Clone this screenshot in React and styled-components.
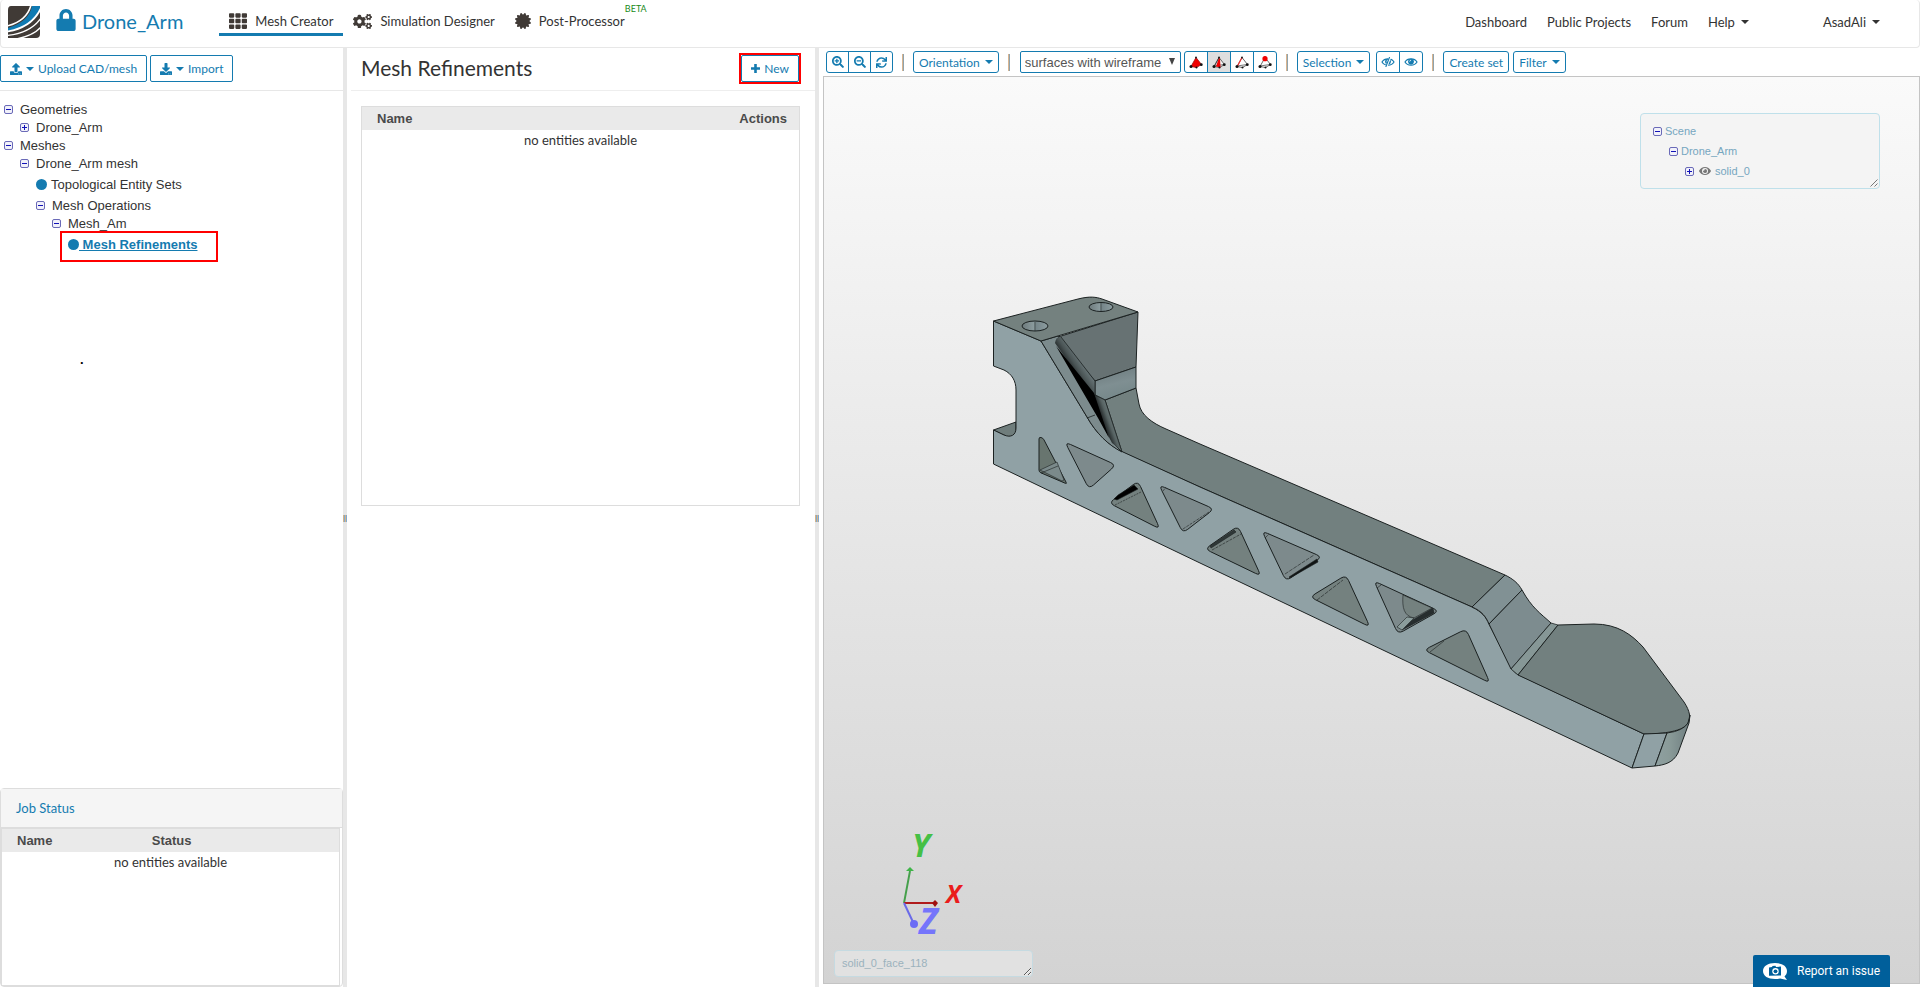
// ■■■■■■■■■■■■■■■■■■■■■■■■■■■■■■■■■■■■■■■■■■■■■■■■■■■■■■■■■■■■■■■■■■■■■■■■■■■■■

import React from "react"
import styled, { createGlobalStyle, css } from "styled-components"
import {
	FaCertificate,
	FaCogs,
	FaDownload,
	FaEye,
	FaLock,
	FaSearchMinus,
	FaSearchPlus,
	FaSync,
	FaTh,
	FaUpload,
} from "react-icons/fa"

const BLUE = "#147bb0"
const LATO = `Lato, "Open Sans", sans-serif`
const ARIAL = `"Liberation Sans", Arial, sans-serif`

// ■■■■■■■■■■■■■■■■■■■■■■■■■■■■■■■■■■■■■■■■■■■■■■■■■■■■■■■■■■■■■■■■■■■■■■■■■■■■■

export default function App() {
	return (
		<Page>
			<GlobalStyle />
			<Header />
			<Workspace>
				<Sidebar />
				<Splitter>
					<span>||</span>
				</Splitter>
				<Refinements />
				<Splitter>
					<span>||</span>
				</Splitter>
				<Viewer />
			</Workspace>
		</Page>
	)
}

// 〓〓〓〓〓〓〓〓〓〓〓〓〓〓〓〓〓〓〓〓〓〓〓〓〓〓〓〓〓〓	HEADER

function Header() {
	return (
		<StyledHeader>
			<Logo />
			<Project href="#project">
				<FaLock size={22} />
				Drone_Arm
			</Project>
			<Tabs>
				<Tab href="#mesh" $active>
					<FaTh size={18} />
					Mesh Creator
				</Tab>
				<Tab href="#simulation">
					<FaCogs size={19} />
					Simulation Designer
				</Tab>
				<Tab href="#post">
					<FaCertificate size={16} />
					Post-Processor
					<Beta>BETA</Beta>
				</Tab>
			</Tabs>
			<UserNav>
				<a href="#dashboard">Dashboard</a>
				<a href="#projects">Public Projects</a>
				<a href="#forum">Forum</a>
				<a href="#help">
					Help <Caret />
				</a>
				<UserLink href="#user">
					AsadAli <Caret />
				</UserLink>
			</UserNav>
		</StyledHeader>
	)
}

function Logo() {
	return (
		<svg width="32" height="32" viewBox="0 0 32 32" aria-label="Home">
			<clipPath id="logoClip">
				<path d="M3 0H32V28Q32 32 28 32H0V4Q0 0 3 0Z" />
			</clipPath>
			<g clipPath="url(#logoClip)">
				<rect width="32" height="32" fill="#403a36" />
				<path d="M0 22C13 18 22 11 24 0H32V3C27 14 18 23 0 25Z" fill="#0f7ab2" />
				<g fill="none" stroke="#fff">
					<path d="M-1 20C11 17 20 11 23 -1" strokeWidth="1.6" />
					<path d="M-1 25.500C15 23 27 15 33 2" strokeWidth="1.8" />
					<path d="M-1 29.500C14 28 26 22 33 12" strokeWidth="1.4" />
					<path d="M8 33C19 31 27 28 33 21" strokeWidth="1.4" />
				</g>
			</g>
		</svg>
	)
}

// 〓〓〓〓〓〓〓〓〓〓〓〓〓〓〓〓〓〓〓〓〓〓〓〓〓〓〓〓〓〓	SIDEBAR

function Sidebar() {
	return (
		<StyledSidebar>
			<ButtonRow>
				<Button>
					<FaUpload size={12} />
					<Caret />
					Upload CAD/mesh
				</Button>
				<Button>
					<FaDownload size={12} />
					<Caret />
					Import
				</Button>
			</ButtonRow>
			<Tree>
				<Node $level={0}>
					<Toggle open />
					Geometries
				</Node>
				<Node $level={1}>
					<Toggle />
					Drone_Arm
				</Node>
				<Node $level={0}>
					<Toggle open />
					Meshes
				</Node>
				<Node $level={1}>
					<Toggle open />
					Drone_Arm mesh
				</Node>
				<Leaf $level={2}>
					<Dot />
					Topological Entity Sets
				</Leaf>
				<Node $level={2}>
					<Toggle open />
					Mesh Operations
				</Node>
				<Node $level={3}>
					<Toggle open />
					Mesh_Am
				</Node>
				<Leaf $level={4} $marked>
					<Dot />
					<a href="#refinements">&nbsp;Mesh Refinements</a>
				</Leaf>
			</Tree>
			<Stray>.</Stray>
			<JobPanel>
				<JobTitle>Job Status</JobTitle>
				<JobBody>
					<Table>
						<thead>
							<tr>
								<th>Name</th>
								<th>Status</th>
							</tr>
						</thead>
						<tbody>
							<tr>
								<td colSpan={2}>no entities available</td>
							</tr>
						</tbody>
					</Table>
				</JobBody>
			</JobPanel>
		</StyledSidebar>
	)
}

function Toggle({ open }) {
	return (
		<svg width="10" height="10" viewBox="0 0 10 10">
			<rect x="0.5" y="1.5" width="8" height="8" rx="1.5" fill="#f1f1fa" stroke="#6a6ab8" />
			<path d={open ? "M2 5.5H7" : "M2 5.5H7M4.5 3V8"} stroke="#1212b8" />
		</svg>
	)
}

// 〓〓〓〓〓〓〓〓〓〓〓〓〓〓〓〓〓〓〓〓〓〓〓〓〓〓〓〓〓〓	MESH REFINEMENTS

function Refinements() {
	return (
		<StyledRefinements>
			<TitleRow>
				<h1>Mesh Refinements</h1>
				<Marked>
					<Button>
						<PlusIcon />
						New
					</Button>
				</Marked>
			</TitleRow>
			<EntityBox>
				<Table>
					<thead>
						<tr>
							<th>Name</th>
							<th className="end">Actions</th>
						</tr>
					</thead>
					<tbody>
						<tr>
							<td colSpan={2}>no entities available</td>
						</tr>
					</tbody>
				</Table>
			</EntityBox>
		</StyledRefinements>
	)
}

function PlusIcon() {
	return (
		<svg width="9" height="9" viewBox="0 0 9 9">
			<path d="M4.5 0V9M0 4.5H9" stroke={BLUE} strokeWidth="2.6" />
		</svg>
	)
}

// 〓〓〓〓〓〓〓〓〓〓〓〓〓〓〓〓〓〓〓〓〓〓〓〓〓〓〓〓〓〓	VIEWER

function Viewer() {
	return (
		<StyledViewer>
			<Toolbar>
				<Group>
					<ToolButton aria-label="Zoom in">
						<FaSearchPlus size={12} />
					</ToolButton>
					<ToolButton aria-label="Zoom out">
						<FaSearchMinus size={12} />
					</ToolButton>
					<ToolButton aria-label="Reset view">
						<FaSync size={11} />
					</ToolButton>
				</Group>
				<Separator />
				<ToolButton>
					Orientation <Caret />
				</ToolButton>
				<Separator />
				<SelectBox>
					<select aria-label="Render mode" defaultValue="wire">
						<option value="wire">surfaces with wireframe</option>
						<option value="surfaces">surfaces</option>
					</select>
					<svg width="6" height="7" viewBox="0 0 6 7">
						<path d="M0 0H6L3 7Z" fill="#444" />
					</svg>
				</SelectBox>
				<Group>
					<ToolButton aria-label="Pick volumes">
						<Tetra kind="volume" />
					</ToolButton>
					<ToolButton aria-label="Pick faces" $pressed>
						<Tetra kind="face" />
					</ToolButton>
					<ToolButton aria-label="Pick edges">
						<Tetra kind="edge" />
					</ToolButton>
					<ToolButton aria-label="Pick nodes">
						<Tetra kind="node" />
					</ToolButton>
				</Group>
				<Separator />
				<ToolButton>
					Selection <Caret />
				</ToolButton>
				<Group>
					<ToolButton aria-label="Hide">
						<EyeIcon slashed />
					</ToolButton>
					<ToolButton aria-label="Show">
						<EyeIcon />
					</ToolButton>
				</Group>
				<Separator />
				<Pair>
					<ToolButton>Create set</ToolButton>
					<ToolButton>
						Filter <Caret />
					</ToolButton>
				</Pair>
			</Toolbar>
			<Canvas>
				<Scene />
				<ScenePanel>
					<SceneNode $level={0}>
						<Toggle open />
						Scene
					</SceneNode>
					<SceneNode $level={1}>
						<Toggle open />
						Drone_Arm
					</SceneNode>
					<SceneNode $level={2}>
						<Toggle />
						<FaEye size={12} />
						solid_0
					</SceneNode>
					<Grip />
				</ScenePanel>
				<Picked aria-label="Picked entities" defaultValue="solid_0_face_118" />
				<Report>
					<ReportIcon />
					Report an issue
				</Report>
			</Canvas>
		</StyledViewer>
	)
}

function Tetra({ kind }) {
	return (
		<svg width="14" height="13" viewBox="0 0 14 13" strokeLinejoin="round">
			<path
				d="M7 1.5L2 10.5L7.5 11.5L12.5 8.5Z"
				fill={kind === "volume" ? "#f00000" : "#fff"}
				fillOpacity={kind === "volume" ? 1 : 0.6}
				stroke={kind === "volume" ? "#a01010" : "#444"}
				strokeWidth="0.8"
			/>
			{kind !== "volume" && <path d="M2 10L12 8.5" stroke="#555" strokeWidth="0.8" />}
			{kind === "face" && <path d="M7 1.5L4 10.5L8.5 11.5L8 3Z" fill="#f00000" />}
			{kind === "edge" && <path d="M7 1.5L2.5 10" stroke="#f03030" strokeWidth="1.2" />}
			{kind === "face" && <path d="M7 1.5L2.500 10" stroke="#333" strokeWidth="0.8" />}
			<g fill="#111">
				<circle cx="2" cy="10.5" r="1.5" />
				<circle cx="7.5" cy="11.5" r="1" />
				<circle cx="12.3" cy="8.7" r="1.4" />
				<circle cx="7" cy="1.5" r="0.9" />
			</g>
			{kind === "node" && <circle cx="7" cy="2.7" r="2.6" fill="#f00000" />}
		</svg>
	)
}

function EyeIcon({ slashed }) {
	return (
		<svg width="14" height="10" viewBox="0 0 14 10">
			<path d="M1 5C3.500 0.800 10.500 0.800 13 5C10.500 9.200 3.500 9.200 1 5Z" fill="#fff" stroke={BLUE} strokeWidth="1.2" />
			<circle cx="7" cy="4.6" r="2.9" fill={BLUE} />
			<path d="M5.7 4.6A1.4 1.4 0 0 1 7.1 3.2" fill="none" stroke="#fff" strokeWidth="0.8" />
			{slashed && <path d="M9.2 0L5.2 10" stroke="#fff" strokeWidth="2.2" />}
			{slashed && <path d="M8.6 0L4.800 10" stroke={BLUE} strokeWidth="1.1" />}
		</svg>
	)
}

function ReportIcon() {
	return (
		<svg width="25" height="17" viewBox="0 0 25 17">
			<path d="M12 0C19 0 24 3 24 8C24 10.500 23 12 21.500 13.500L24 17L17 15.500C15.500 16 14 16 12 16C5 16 0 13 0 8C0 3 5 0 12 0Z" fill="#fff" />
			<path d="M6 4.500L9 4L9.500 3L12.500 2.800L13 4L18 3.600V12.500L6 12.800Z" fill="#005f9b" />
			<circle cx="12.500" cy="8.300" r="3.200" fill="#fff" />
			<circle cx="12.500" cy="8.300" r="1.900" fill="#005f9b" />
		</svg>
	)
}

function Grip() {
	return (
		<StyledGrip width="8" height="8" viewBox="0 0 8 8">
			<path d="M0.500 7.500L7.500 0.500M4.500 7.500L7.500 4.500" stroke="#777" />
		</StyledGrip>
	)
}

// 〓〓〓〓〓〓〓〓〓〓〓〓〓〓〓〓〓〓〓〓〓〓〓〓〓〓〓〓〓〓	3D SCENE

// closed polygon with its corners rounded by r
const rounded = (points, r = 6) =>
	points
		.map((p, i) => {
			const prev = points[(i + points.length - 1) % points.length]
			const next = points[(i + 1) % points.length]
			const toward = (q) => {
				const d = Math.hypot(q[0] - p[0], q[1] - p[1])
				return `${p[0] + ((q[0] - p[0]) * r) / d} ${p[1] + ((q[1] - p[1]) * r) / d}`
			}
			return `${i ? "L" : "M"}${toward(prev)}Q${p[0]} ${p[1]} ${toward(next)}`
		})
		.join("") + "Z"

const POCKETS = [
	{ fill: "#68756f", points: [[1039, 437], [1043, 438], [1067, 484], [1039, 472]] },
	{ fill: "#7d8a8c", points: [[1065, 442], [1116, 465], [1089, 489]] },
	{ fill: "#74817f", points: [[1109, 503], [1138, 481], [1160, 529]] },
	{ fill: "#7d8a8c", points: [[1159, 485], [1214, 509], [1183, 533]] },
	{ fill: "#74817f", points: [[1205, 549], [1238, 526], [1261, 576]] },
	{ fill: "#7d8a8c", points: [[1262, 531], [1322, 557], [1286, 581]] },
	{ fill: "#74817f", points: [[1310, 597], [1346, 575], [1370, 627]] },
	{ fill: "#7d8a8c", points: [[1374, 581], [1439, 611], [1398, 634]] },
	{ fill: "#74817f", points: [[1424, 650], [1466, 629], [1490, 683]] },
]

function Scene() {
	return (
		<StyledScene viewBox="824 77 1095 906">
			<defs>
				<linearGradient id="bend" x1="0" y1="0" x2="0.300" y2="1">
					<stop offset="0" stopColor="#69777a" />
					<stop offset="0.600" stopColor="#7f8f92" />
					<stop offset="1" stopColor="#76888a" />
				</linearGradient>
				<linearGradient id="roll" gradientUnits="userSpaceOnUse" x1="1070" y1="370" x2="1082" y2="362">
					<stop offset="0" stopColor="#1c2021" />
					<stop offset="0.500" stopColor="#4a5455" />
					<stop offset="1" stopColor="#677476" />
				</linearGradient>
				<linearGradient id="lowerRoll" gradientUnits="userSpaceOnUse" x1="1102" y1="420" x2="1113" y2="416">
					<stop offset="0" stopColor="#1c2021" />
					<stop offset="0.500" stopColor="#566262" />
					<stop offset="1" stopColor="#728080" />
				</linearGradient>
				<linearGradient id="tip">
					<stop offset="0" stopColor="#8fa0a1" />
					<stop offset="0.400" stopColor="#8a9b99" />
					<stop offset="1" stopColor="#6f7e80" />
				</linearGradient>
				<linearGradient id="hole">
					<stop offset="0" stopColor="#6c797b" />
					<stop offset="0.450" stopColor="#8b9b9e" />
					<stop offset="0.550" stopColor="#76868a" />
					<stop offset="1" stopColor="#8d9da0" />
				</linearGradient>
			</defs>

			<g stroke="#1c2222" strokeWidth="1" strokeLinejoin="round">
				{/* notch behind the lower jaw */}
				<path d="M993.500 430L1016 422V436L1008 437Z" fill="#6f7d7c" />
				{/* long upper surface */}
				<path
					d="M1105 400L1136 388L1139 404C1141 415 1152 423 1166 429L1200 444L1505 575L1472 607L1200 487L1122 452Z"
					fill="#72807f"
				/>
				{/* side face */}
				<path
					d="M993.500 321L1041 341L1087 417C1096 433 1108 445 1123 452L1200 487L1472 607C1482 612 1486 617 1489 624L1511 667C1513 671 1515 673 1519 675L1644 734L1632 768L1488 700L1200 563L1152 540L993.500 464V430L1004 435C1011 438 1016 435 1016 428V390C1016 381 1012 374 1004 370L993.500 366Z"
					fill="#90a1a5"
				/>
				{/* mounting block */}
				<path d="M1058 337L1138 312L1136 367L1095 381Z" fill="#677273" />
				<path d="M1041 341L1058 336L1115 445L1122 452C1108 445 1096 433 1087 417Z" fill="#7c8b8d" />
				<path d="M1095 381L1136 367L1136 388L1105 400L1095 395Z" fill="url(#bend)" />
				<path d="M1055 343Q1056 336 1061 337L1095 381V396L1088 390Z" fill="url(#roll)" stroke="none" />
				<path d="M1094 394L1105 400L1122 451L1112 443L1094 408Z" fill="url(#lowerRoll)" stroke="none" />
				<path d="M1056 346L1094 393L1109 438L1098 418Z" fill="#000" stroke="none" />
				<path d="M1061 337L1095 381V395L1105 400L1122 452" fill="none" strokeWidth="0.800" />
				<path d="M1087 418L1095 415" strokeWidth="0.800" />
				<path
					d="M993.500 321L1078 299C1090 296 1096 297 1102 299L1138 312L1041 341Z"
					fill="#74817f"
				/>
				<ellipse cx="1035" cy="326" rx="13" ry="5" fill="url(#hole)" />
				<ellipse cx="1101" cy="307" rx="12" ry="4.500" fill="url(#hole)" />
				<path d="M1035 322V331M1101 303V311" strokeWidth="0.600" />

				{/* step down to the motor mount */}
				<path
					d="M1505 575C1513 579 1518 583 1522 590L1489 624C1486 617 1482 611 1472 607Z"
					fill="#819194"
				/>
				<path
					d="M1522 590C1532 608 1540 613 1551 623L1511 669L1489 624Z"
					fill="#7d8c8f"
				/>
				<path d="M1551 623L1558 625L1518 675L1511 669Z" fill="#869796" strokeWidth="0.800" />
				<path
					d="M1558 625L1594 624C1618 624 1632 635 1643 647L1684 702C1690 711 1691 718 1688 723C1684 731 1664 734 1644 734L1518 675Z"
					fill="#72807f"
				/>
				<path d="M1644 734L1667 733L1655 766L1632 768Z" fill="#90a1a5" />
				<path
					d="M1667 733Q1683 731 1688 723L1690 715L1689 723L1678 753C1673 763 1664 765 1655 766Z"
					fill="url(#tip)"
				/>
			</g>

			{/* lightening pockets */}
			<g stroke="#1a2020" strokeWidth="1">
				{POCKETS.map(({ fill, points }) => (
					<path key={points[0].join()} d={rounded(points, points.length > 3 ? 2 : 6)} fill={fill} />
				))}
			</g>
			<g stroke="#1c2222" strokeWidth="0.600" fill="none">
				<path d="M1040 470L1057 462L1064 480L1062 481Z" fill="#7b8a8b" />
				<path d="M1041 473L1058 466" />
				<path d="M1114 499L1118 495L1134 485L1138 489L1117 500Z" fill="#000" />
				<path d="M1115 505L1141 492" strokeDasharray="2 1" />
				<path d="M1183 529L1209 512M1163 491L1166 487" strokeDasharray="3 1" />
				<path d="M1210 546L1234 530L1236 532L1211 548Z" fill="#2f3838" />
				<path d="M1212 550L1241 534" strokeDasharray="3 1" />
				<path d="M1289 577L1317 559L1318 562L1290 578Z" fill="#101414" />
				<path d="M1285 574L1314 555M1265 538L1269 534" strokeDasharray="4 1" />
				<path d="M1317 600L1343 580" strokeDasharray="4 1" />
				<path d="M1403 595C1402 608 1404 616 1414 618L1432 608Z" fill="#74817f" />
				<path d="M1402 630L1411 621L1433 608L1434 613Z" fill="#262d2e" />
				<path d="M1397 627L1407 617L1414 618L1402 630Z" fill="#8b9d9c" />
				<path d="M1377 588L1381 585M1430 652L1444 641" />
			</g>

			{/* orientation axes */}
			<g strokeWidth="2">
				<path d="M904 903L910 871" stroke="#45a04b" />
				<path d="M904 903H934" stroke="#b01c1c" />
				<path d="M904 903L913 922" stroke="#6a6ae8" />
			</g>
			<path d="M906 871L910 867L914 871Z" fill="#3fb548" />
			<path d="M932 903L935 900L938 903L935 907Z" fill="#a01010" />
			<circle cx="914" cy="924" r="4" fill="#6c6cf5" />
			<Axis x="912" y="857" fill="#45c045">
				Y
			</Axis>
			<Axis x="946" y="903" fill="#ea1c1c" $small>
				X
			</Axis>
			<Axis x="919" y="934" fill="#7575fb" $large>
				Z
			</Axis>
		</StyledScene>
	)
}

// 〓〓〓〓〓〓〓〓〓〓〓〓〓〓〓〓〓〓〓〓〓〓〓〓〓〓〓〓〓〓	STYLED_COMPONENTS

const GlobalStyle = createGlobalStyle`
	*, *::before, *::after {
		box-sizing: border-box;
	}

	body {
		margin: 0;
		background-color: #ffffff;
		color: #333333;
		font-family: ${LATO};
		font-size: 13px;
	}

	a {
		color: inherit;
		text-decoration: none;
	}

	button, select, textarea {
		margin: 0;
		font: inherit;
	}
`

const Page = styled.div`
	display: flex;
	flex-direction: column;
	min-height: 100vh;
`

const StyledHeader = styled.header`
	display: flex;
	align-items: center;
	height: 48px;
	padding: 0 30px 4px 7px;
	border: 1px solid #e7e7e7;
	border-top: 0;
	border-radius: 4px;
`

const Project = styled.a`
	display: flex;
	align-items: center;
	gap: 5px;
	margin-left: 15px;
	padding-bottom: 2px;
	color: ${BLUE};
	font-size: 20px;
	line-height: 24px;

	svg {
		margin-bottom: 2px;
	}
`

const Tabs = styled.nav`
	display: flex;
	align-self: stretch;
	align-items: flex-start;
	margin-left: 36px;
	padding-top: 6px;
`

const Tab = styled.a`
	position: relative;
	display: flex;
	align-items: center;
	gap: 8px;
	height: 30px;
	padding: 3px 10px 0;
	border-bottom: 3px solid ${({ $active }) => ($active ? BLUE : "transparent")};

	svg {
		color: #403a36;
	}
`

const Beta = styled.sup`
	position: absolute;
	top: -3px;
	right: -12px;
	color: #1a8a1a;
	font-size: 9px;
	line-height: 12px;
`

const UserNav = styled.nav`
	display: flex;
	gap: 20px;
	margin-left: auto;

	a {
		display: flex;
		align-items: center;
		gap: 6px;
		line-height: 20px;
	}
`

const UserLink = styled.a`
	margin: 0 9px 0 54px;
`

const Caret = styled.span`
	display: inline-block;
	border-top: 4px solid;
	border-right: 4px solid transparent;
	border-left: 4px solid transparent;
`

const Workspace = styled.main`
	display: grid;
	flex: 1;
	grid-template-columns: 343px 4px 468px 4px minmax(0, 1fr);
`

const Splitter = styled.div`
	display: flex;
	align-items: center;
	justify-content: center;
	background-color: #e7e7e7;
	color: #333333;
	font-family: ${ARIAL};
	font-size: 8px;
`

const StyledSidebar = styled.aside`
	display: flex;
	flex-direction: column;
`

const ButtonRow = styled.div`
	display: flex;
	align-items: center;
	gap: 3px;
	height: 43px;
	padding-bottom: 1px;
	border-bottom: 1px solid #e7e7e7;
`

const Button = styled.button`
	display: flex;
	align-items: center;
	gap: 4px;
	height: 27px;
	padding: 0 9px;
	border: 1px solid ${BLUE};
	border-radius: 2px;
	background-color: #ffffff;
	color: ${BLUE};
	font-size: 12px;
	cursor: pointer;
`

const Tree = styled.div`
	padding-top: 9px;
	font-family: ${ARIAL};
`

const Node = styled.div`
	display: flex;
	align-items: center;
	gap: 6px;
	height: 18px;
	padding-left: ${({ $level }) => 4 + $level * 16}px;
`

const Leaf = styled(Node)`
	position: relative;
	gap: ${({ $marked }) => ($marked ? 0 : 4)}px;
	height: 24px;

	a {
		color: ${BLUE};
		font-weight: bold;
		text-decoration: underline;
	}

	${({ $marked }) =>
		$marked &&
		css`
			&::after {
				content: "";
				position: absolute;
				top: -1px;
				left: 60px;
				width: 158px;
				height: 31px;
				border: 2px solid #ff0000;
			}
		`}
`

const Dot = styled.span`
	width: 11px;
	height: 11px;
	border-radius: 50%;
	background-color: ${BLUE};
`

const Stray = styled.div`
	margin-top: 96px;
	padding-left: 80px;
	color: #000000;
	font-family: ${ARIAL};
	font-weight: bold;
	line-height: 16px;
`

const JobPanel = styled.section`
	display: flex;
	flex-direction: column;
	height: 199px;
	margin-top: auto;
	border: 1px solid #dddddd;
	border-radius: 4px;
`

const JobTitle = styled.h2`
	margin: 0;
	padding: 0 15px;
	border-bottom: 1px solid #dddddd;
	background-color: #f5f5f5;
	color: ${BLUE};
	font-size: 13px;
	font-weight: normal;
	line-height: 38px;
`

const JobBody = styled.div`
	flex: 1;
	margin-right: 2px;
	border: 1px solid #dddddd;
`

const Table = styled.table`
	width: 100%;
	border-collapse: collapse;
	table-layout: fixed;

	th {
		width: 40%;
		height: 23px;
		padding: 0 15px 1px;
		background-color: #eaeaea;
		color: #4a4a4a;
		font-family: ${ARIAL};
		text-align: left;
	}

	th + th {
		width: 60%;
	}

	th.end {
		padding-right: 12px;
		text-align: right;
	}

	td {
		padding: 0;
		line-height: 20px;
		text-align: center;
	}
`

const StyledRefinements = styled.section`
	padding-left: 4px;
`

const TitleRow = styled.div`
	display: flex;
	align-items: center;
	justify-content: space-between;
	height: 43px;
	padding: 0 14px 2px 10px;
	border-bottom: 1px solid #eeeeee;

	h1 {
		margin: 0;
		padding-bottom: 2px;
		font-size: 21px;
		font-weight: normal;
	}
`

const Marked = styled.div`
	border: 2px solid #ff0000;
`

const EntityBox = styled.div`
	height: 400px;
	margin: 15px 15px 0 10px;
	border: 1px solid #dddddd;
`

const StyledViewer = styled.section`
	display: flex;
	flex-direction: column;
	padding: 0 0 3px 4px;
`

const Toolbar = styled.div`
	display: flex;
	align-items: center;
	height: 28px;
	padding: 0 3px;
`

const ToolButton = styled.button`
	display: flex;
	align-items: center;
	justify-content: center;
	gap: 5px;
	height: 22px;
	padding: 0 5px;
	border: 1px solid ${BLUE};
	border-radius: 3px;
	background-color: ${({ $pressed }) => ($pressed ? "#dedede" : "#ffffff")};
	color: ${BLUE};
	font-size: 12px;
	white-space: nowrap;
	cursor: pointer;
`

const Group = styled.div`
	display: flex;

	${ToolButton} {
		min-width: 23px;
		padding: 0 4px;
	}

	${ToolButton} + ${ToolButton} {
		margin-left: -1px;
	}

	${ToolButton}:not(:first-child) {
		border-top-left-radius: 0;
		border-bottom-left-radius: 0;
	}

	${ToolButton}:not(:last-child) {
		border-top-right-radius: 0;
		border-bottom-right-radius: 0;
	}

	${ToolButton} + & {
		margin-left: 6px;
	}
`

const Separator = styled.span`
	width: 2px;
	height: 17px;
	margin: 0 9px;
	border-right: 1px solid #8fa3ad;
	background-color: #d8b48f;
`

const SelectBox = styled.div`
	position: relative;
	margin: 0 3px 0 1px;

	select {
		width: 161px;
		height: 22px;
		padding: 0 4px;
		appearance: none;
		border: 1px solid ${BLUE};
		border-radius: 2px;
		background-color: #ffffff;
		color: #555555;
		font-family: ${ARIAL};
		font-size: 13px;
	}

	svg {
		position: absolute;
		top: 7px;
		right: 6px;
		pointer-events: none;
	}
`

const Pair = styled.div`
	display: flex;
	gap: 4px;
`

const Canvas = styled.div`
	position: relative;
	flex: 1;
	border: 1px solid #c4c4c4;
	background-image: linear-gradient(#fafafa, #d3d3d3);
`

const StyledScene = styled.svg`
	position: absolute;
	inset: 0;
	width: 100%;
	height: 100%;
`

const Axis = styled.text`
	font-family: "Open Sans", sans-serif;
	font-size: ${({ $small, $large }) => ($small ? 25 : $large ? 35 : 32)}px;
	font-style: italic;
	font-weight: bold;
`

const ScenePanel = styled.div`
	position: absolute;
	top: 36px;
	right: 39px;
	width: 240px;
	height: 76px;
	padding: 7px 12px;
	border: 1px solid #bfe0ea;
	border-radius: 4px;
	background-color: #f4f4f4;
`

const SceneNode = styled.div`
	display: flex;
	align-items: center;
	gap: 2px;
	height: 20px;
	padding-left: ${({ $level }) => $level * 16}px;
	color: #76a6c0;
	font-family: ${ARIAL};
	font-size: 11px;

	svg + svg {
		margin: 0 2px;
		color: #777777;
	}
`

const StyledGrip = styled.svg`
	position: absolute;
	right: 1px;
	bottom: 1px;
`

const Picked = styled.textarea`
	position: absolute;
	bottom: 6px;
	left: 10px;
	width: 199px;
	height: 27px;
	padding: 5px 7px;
	border: 1px solid #c5dae1;
	border-radius: 4px;
	background-color: #e1e1e1;
	color: #9bb2bd;
	font-family: ${ARIAL};
	font-size: 11px;
	line-height: 15px;
	overflow: hidden;
`

const Report = styled.button`
	position: absolute;
	right: 29px;
	bottom: -4px;
	display: flex;
	align-items: center;
	gap: 9px;
	height: 32px;
	padding: 0 10px;
	border: 0;
	border-radius: 2px 2px 0 0;
	background-color: #005f9b;
	color: #ffffff;
	font-family: Roboto, sans-serif;
	font-size: 12px;
	cursor: pointer;
`
